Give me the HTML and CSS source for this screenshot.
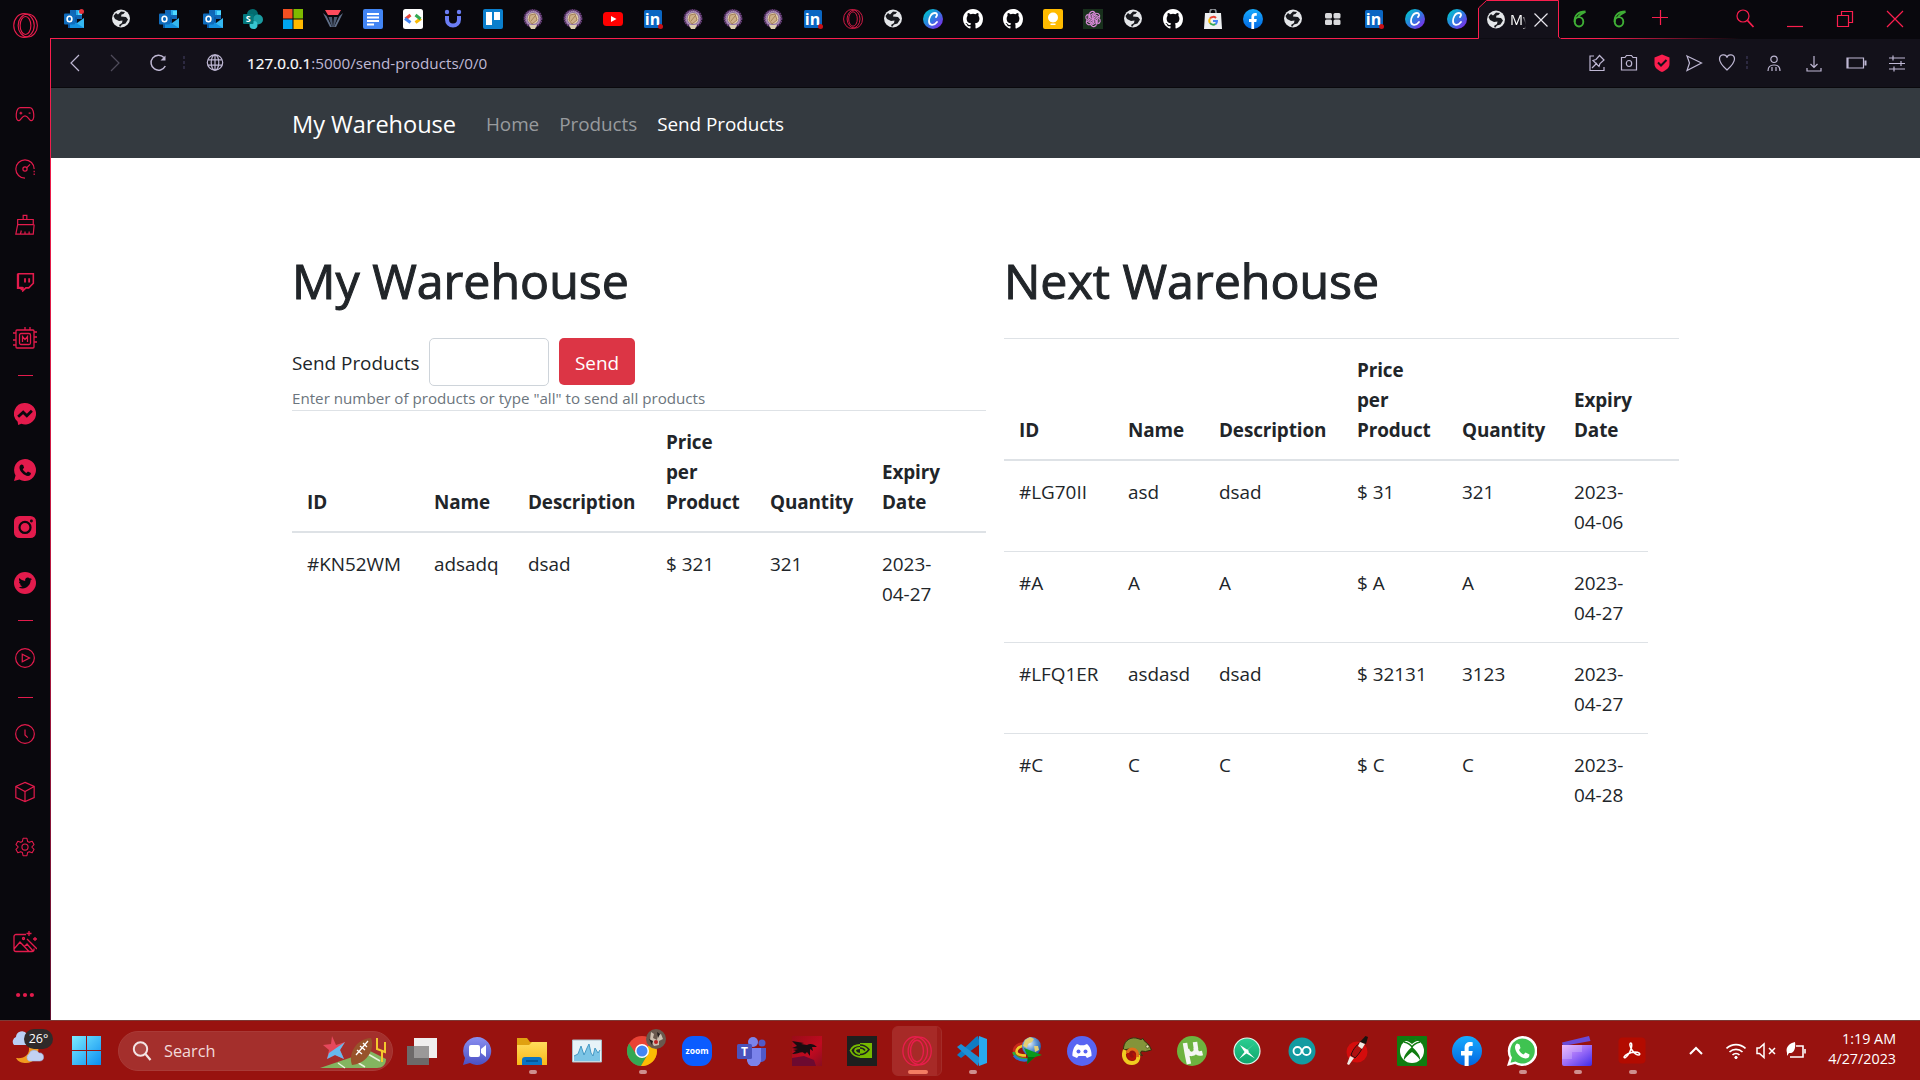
FILE: index.html
```
<!DOCTYPE html>
<html lang="en">
<head>
<meta charset="utf-8">
<title>My Warehouse</title>
<link rel="stylesheet" href="styles.css">
</head>
<body>
<svg class="gradients" width="0" height="0" aria-hidden="true">
  <defs>
    <linearGradient id="g-canva" x1="0" y1="0" x2="1" y2="1"><stop offset="0.1" stop-color="#00c4cc"/><stop offset="0.5" stop-color="#2f7be0"/><stop offset="0.9" stop-color="#7d2ae8"/></linearGradient>
    <linearGradient id="g-fb" x1="0" y1="0" x2="0" y2="1"><stop offset="0" stop-color="#18acfe"/><stop offset="1" stop-color="#0165e1"/></linearGradient>
    <linearGradient id="g-win" x1="0" y1="0" x2="1" y2="1"><stop offset="0" stop-color="#7cecff"/><stop offset="1" stop-color="#0a8df0"/></linearGradient>
    <linearGradient id="g-folder" x1="0" y1="0" x2="0" y2="1"><stop offset="0" stop-color="#ffdb5c"/><stop offset="1" stop-color="#f9b918"/></linearGradient>
    <linearGradient id="g-clip" x1="0" y1="0" x2="1" y2="1"><stop offset="0" stop-color="#e9a9fb"/><stop offset="0.5" stop-color="#9a6cf8"/><stop offset="1" stop-color="#3f2be8"/></linearGradient>
    <linearGradient id="g-chat" x1="0" y1="0" x2="0" y2="1"><stop offset="0" stop-color="#8a8ff0"/><stop offset="1" stop-color="#4b50c4"/></linearGradient>
    <linearGradient id="g-kali" x1="0" y1="0" x2="1" y2="1"><stop offset="0" stop-color="#9a0c18"/><stop offset="0.6" stop-color="#c00a20"/><stop offset="1" stop-color="#8a0d20"/></linearGradient>
    <radialGradient id="g-globe" cx=".4" cy=".35" r=".7"><stop offset="0" stop-color="#dfeaf6"/><stop offset=".5" stop-color="#5f97d6"/><stop offset="1" stop-color="#1d4c97"/></radialGradient>
    <linearGradient id="g-sym" x1="0" y1="0" x2="0" y2="1"><stop offset="0" stop-color="#2ccf92"/><stop offset="1" stop-color="#0fa56b"/></linearGradient>
  </defs>
</svg>
<svg class="symbols" aria-hidden="true">
  <symbol id="outlook" viewBox="0 0 20 20"><path fill="#1066b5" d="M6 1h12v9H6z"/><path fill="#28a8ea" d="M12 1h6v5h-6z"/><path fill="#50d9ff" d="M14 2h4v4h-4z"/><path fill="#0a5ba8" d="M4 8h9v11H4z"/><path fill="#35b8f1" d="M20 9v10H6z"/><path fill="#1490df" d="M6 10l14 9H6z"/><rect y="4.500" width="11" height="11" rx="1" fill="#0f6cbd"/><ellipse cx="5.500" cy="10" rx="2.400" ry="2.800" fill="none" stroke="#fff" stroke-width="1.600"/></symbol>
  <symbol id="world" viewBox="0 0 20 20"><circle cx="10" cy="9.500" r="9" fill="#e4e6e9"/><path fill="#17181d" d="M10 2.500l4 .5-1.500 2-2 .5-.5 2 5 .5 2 2.500-2.500 4-3.500 1-2 2.500-1-2 3-2 .5-2.500-3.500.5-4-2-1.500-3L5 4l2 1.500z"/></symbol>
  <symbol id="sharepoint" viewBox="0 0 20 20"><circle cx="9.500" cy="5.500" r="5.500" fill="#036c70"/><circle cx="15" cy="10.500" r="5" fill="#1a9ba1"/><circle cx="10.500" cy="16" r="4" fill="#37c6d0"/><rect y="5" width="10.500" height="10" rx="1" fill="#03787c"/><text x="5.200" y="13.200" class="ic-text" font-size="9" fill="#fff">S</text></symbol>
  <symbol id="msft" viewBox="0 0 20 20"><path fill="#f25022" d="M0 0h9.500v9.500H0z"/><path fill="#7fba00" d="M10.500 0H20v9.500h-9.500z"/><path fill="#00a4ef" d="M0 10.500h9.500V20H0z"/><path fill="#ffb900" d="M10.500 10.500H20V20h-9.500z"/></symbol>
  <symbol id="vee" viewBox="0 0 20 20"><path fill="#ff4b5c" d="M2 1h16l-3 5H5z"/><path fill="#60708a" d="M0 4l3.500 3L9 18H7zM20 4l-3.500 3L11 18h2z"/><path fill="#4a586f" d="M5.500 8h3.500l1 10H9zM14.500 8H11l-1 10h1z"/></symbol>
  <symbol id="docs" viewBox="0 0 20 20"><rect width="20" height="20" rx="2" fill="#4285f4"/><path stroke="#fff" stroke-width="2" d="M4 5h12M4 8.500h12M4 12h12M4 15.500h7"/></symbol>
  <symbol id="gdev" viewBox="0 0 20 20"><rect width="20" height="20" rx="2.500" fill="#fff"/><path fill="none" stroke="#ea4335" stroke-width="3" d="M2.500 10L7.500 6"/><path fill="none" stroke="#4285f4" stroke-width="3" d="M2 9.500l5.500 4"/><path fill="none" stroke="#fbbc04" stroke-width="3" d="M12.500 13.500l5.500-4"/><path fill="none" stroke="#34a853" stroke-width="3" d="M12.500 6l5 4"/></symbol>
  <symbol id="udot" viewBox="0 0 20 20"><path fill="none" stroke="#6b7df5" stroke-width="4" d="M4 7v3.500a6 6 0 0 0 12 0V7"/><circle cx="4" cy="3" r="2.200" fill="#6b7df5"/><circle cx="16" cy="3" r="2.200" fill="#6b7df5"/></symbol>
  <symbol id="trello" viewBox="0 0 20 20"><rect width="20" height="20" rx="2" fill="#0a7fcd"/><path fill="#fff" d="M3 3h6v13H3zM11 3h6v8h-6z"/></symbol>
  <symbol id="crest" viewBox="0 0 20 20"><circle cx="10" cy="9.500" r="8.300" fill="#b69fc0" stroke="#6a3f7c" stroke-width="2.200" stroke-dasharray="1.600 .6"/><circle cx="10" cy="9.500" r="6" fill="#e0cda6" stroke="#8a6c9a"/><path stroke="#a5805a" fill="#cdb189" d="M7 6l5-1 2 6-5 4-3-4zM8 12l4-5"/><path fill="#ddd0b0" d="M6 16h8l-2 4H8z"/></symbol>
  <symbol id="youtube" viewBox="0 0 20 20"><rect y="3" width="20" height="14" rx="3.500" fill="#f00"/><path fill="#fff" d="M8 7l5.500 3L8 13z"/></symbol>
  <symbol id="linkedin" viewBox="0 0 20 20"><rect x="1" y="1" width="18" height="18" rx="1.500" fill="#0a66c2"/><text x="9.500" y="16" class="ic-text" font-size="16" fill="#fff">in</text><circle cx="17.500" cy="17.500" r="2.500" fill="#cb1016"/></symbol>
  <symbol id="opera" viewBox="0 0 20 20"><g fill="none" stroke="#e81d4c" stroke-width=".9"><ellipse cx="8.800" cy="10" rx="8.200" ry="9.500"/><ellipse cx="11.800" cy="10" rx="7.700" ry="9.200"/><ellipse cx="10" cy="10" rx="4.300" ry="7.200"/></g></symbol>
  <symbol id="canva" viewBox="0 0 20 20"><circle cx="10" cy="10" r="10" fill="url(#g-canva)"/><path fill="none" stroke="#fff" stroke-width="1.800" stroke-linecap="round" d="M13 8c2-2 1-4-1-4-4 0-6 5-6 8 0 5 5 5 8 1"/></symbol>
  <symbol id="github" viewBox="0 0 16 16"><path fill="#fff" d="M8 0C3.580 0 0 3.580 0 8c0 3.540 2.290 6.530 5.470 7.590.4.070.55-.17.55-.38 0-.19-.01-.82-.01-1.490-2.010.37-2.530-.49-2.690-.94-.09-.23-.48-.94-.82-1.130-.28-.15-.68-.52-.01-.53.63-.01 1.080.58 1.230.82.72 1.210 1.870.87 2.330.66.07-.52.28-.87.51-1.070-1.780-.2-3.640-.89-3.640-3.950 0-.87.31-1.590.82-2.150-.08-.2-.36-1.020.08-2.120 0 0 .67-.21 2.200.82a7.600 7.600 0 0 1 4 0c1.530-1.040 2.200-.82 2.200-.82.44 1.100.16 1.920.08 2.120.51.56.82 1.270.82 2.150 0 3.070-1.870 3.750-3.650 3.950.29.25.54.73.54 1.480 0 1.070-.01 1.930-.01 2.200 0 .21.15.46.55.38A8.010 8.010 0 0 0 16 8c0-4.420-3.580-8-8-8z"/></symbol>
  <symbol id="keep" viewBox="0 0 20 20"><rect width="20" height="20" rx="2" fill="#fb0"/><circle cx="10" cy="8.500" r="5" fill="#fff"/><path fill="#fff" d="M7.500 10h5v3h-5zM7.500 14.500h5V16h-5z"/></symbol>
  <symbol id="gpt" viewBox="0 0 20 20"><path fill="#18301c" d="M0 0h20v20H0z"/><g fill="none" stroke="#d98ad8" stroke-width="1.100"><path id="petal" d="M10 10.800L6.500 8.800V5.500a3 3 0 0 1 5.300-2l-4 2.300v4"/><use href="#petal" transform="rotate(60 10 10)"/><use href="#petal" transform="rotate(120 10 10)"/><use href="#petal" transform="rotate(180 10 10)"/><use href="#petal" transform="rotate(240 10 10)"/><use href="#petal" transform="rotate(300 10 10)"/></g></symbol>
  <symbol id="gshop" viewBox="0 0 20 20"><path fill="none" stroke="#8d9197" stroke-width="1.600" d="M7 5V3a3 3 0 0 1 6 0v2"/><path fill="#eef0f2" d="M2 4h16l1 16H1z"/><g fill="none" stroke-width="2"><path stroke="#ea4335" d="M7 9.500a4 4 0 0 1 6-.5"/><path stroke="#fbbc04" d="M7 14a4 4 0 0 1 0-4.500"/><path stroke="#34a853" d="M7 14a4 4 0 0 0 5.500 1"/><path stroke="#4285f4" d="M10 12h4a4 4 0 0 1-1.500 3.200"/></g></symbol>
  <symbol id="facebook" viewBox="0 0 20 20"><circle cx="10" cy="10" r="10" fill="url(#g-fb)"/><path fill="#fff" d="M8.400 20v-7H6v-3h2.400V8c0-2.700 1.500-4 3.800-4 .8 0 1.600.2 1.600.2v2.500h-1.300c-1.100 0-1.400.7-1.400 1.400V10h2.700l-.5 3h-2.200v7z"/></symbol>
  <symbol id="tiles" viewBox="0 0 20 20"><g fill="#d9d9dc"><rect x="2" y="4" width="7" height="5.500" rx="1.500"/><rect x="10.500" y="4" width="7" height="5.500" rx="1.500"/><rect x="2" y="10.500" width="7" height="5.500" rx="1.500"/><rect x="10.500" y="10.500" width="7" height="5.500" rx="1.500"/></g></symbol>
  <symbol id="six" viewBox="0 0 20 20"><g fill="none" stroke="#3fae35" stroke-width="1.900"><ellipse cx="9" cy="12.800" rx="4.300" ry="4.700"/><path d="M4.700 13C4 6.500 8 2.500 15.500 2.500M8 8.500C9 5 12 5.500 15.500 2.500"/></g></symbol>

  <symbol id="pad" viewBox="0 0 24 24"><path d="M7 5h10c3 0 4 2 4.500 7 .5 5-1 8-3.500 7-2-1-3-5-6-5s-4 4-6 5c-2.500 1-4-2-3.500-7C3 7 4 5 7 5zM6 11h3M7.500 9.500v3M16 11h2"/></symbol>
  <symbol id="gauge" viewBox="0 0 24 24"><path d="M12 22A10 10 0 1 1 22 12"/><path stroke-dasharray="1.500 1.500" d="M22 14v5"/><circle cx="12" cy="12" r="2.300"/><path d="M14 10.500l3.500-3.500"/></symbol>
  <symbol id="broom" viewBox="0 0 24 24"><path d="M10 6V1.500h4V6M4 6h17v5.500H4zM4 11.500L2 22h19l1-10.500M7 22l1-4M12 22v-3M16.500 22v-3"/></symbol>
  <symbol id="twitch" viewBox="0 0 24 24"><path d="M4 2h18v11.500L16.500 19H13l-3.500 3.500V19H4z" stroke-width="1.900"/><path d="M12 7.500v5M17 7.500v5" stroke-width="2.200"/><path d="M3.500 2v17H8v3" stroke-width="2.600"/></symbol>
  <symbol id="chip" viewBox="0 0 24 24"><rect x="3" y="3" width="18" height="18" rx="1"/><rect x="6.500" y="6.500" width="11" height="11" rx="1.500"/><path d="M9.500 15V9.500l2.500 3 2.500-3V15M12 3V0M17 3V0M21 5h3M21 10h3M21 15h3M0 6h3M0 13h3M0 18h3"/></symbol>
  <symbol id="messenger" viewBox="0 0 24 24"><path class="solid" d="M12 0a12 11.700 0 1 1-4 22.700L4.500 24 4 20.500A11.700 11.700 0 0 1 12 0z"/><path stroke="#09080d" stroke-width="3" d="M4.500 15l5.500-5 4 4 5.500-5.500"/></symbol>
  <symbol id="whats-line" viewBox="0 0 24 24"><path class="solid" d="M12 0A12 12 0 1 1 6 22.400L0 24l1.700-6A12 12 0 0 1 12 0z"/><path fill="#09080d" stroke="none" d="M8 6l2 .5 1 3-1.500 1.700c1 1.800 2.200 3 4 4l1.700-1.500 3.300 1.600c0 2.200-1.500 3.200-3.200 3.200C11 18 6 13.500 6 9.200 6 7.500 7 6.500 8 6z"/></symbol>
  <symbol id="insta" viewBox="0 0 24 24"><rect class="solid" width="24" height="24" rx="6"/><circle cx="12" cy="12.500" r="6" stroke="#09080d" stroke-width="2.400"/><circle cx="19" cy="5.500" r=".9" stroke="#09080d"/></symbol>
  <symbol id="twitter" viewBox="0 0 24 24"><circle class="solid" cx="12" cy="12" r="12"/><path fill="#09080d" stroke="none" d="M5 16.500c2 .2 3.300-.4 4.200-1.100-1.400 0-2.400-1-2.700-2 .5.100.9 0 1.300-.1-1.500-.4-2.400-1.600-2.400-3 .4.300.9.400 1.400.4-1.400-1-1.800-2.700-.9-4.100 1.600 1.900 3.600 3 6.300 3.100-.5-2.200 1-3.600 2.800-3.600 1 0 1.700.4 2.300 1 .7-.1 1.300-.4 1.900-.7-.2.700-.7 1.200-1.300 1.600l1.700-.4c-.4.600-.9 1.100-1.500 1.500.2 6-6.900 11.500-13.100 7.400z"/></symbol>
  <symbol id="play" viewBox="0 0 24 24"><circle cx="12" cy="12" r="10.200"/><path d="M9 8v8l8-4z"/></symbol>
  <symbol id="clock" viewBox="0 0 24 24"><circle cx="12" cy="12" r="10.200"/><path d="M12 7v6l3 3"/></symbol>
  <symbol id="cube" viewBox="0 0 24 24"><path d="M12 1.500l10 4.500v12l-10 4.500L2 18V6zM2 6l10 5.500L22 6M12 11.500v11"/></symbol>
  <symbol id="gear" viewBox="0 0 24 24"><circle cx="12" cy="12" r="3.700"/><path d="M9.700 1.500h4.600l.8 3.800 2 1.100 3.500-1.200 2.200 3.900-2.700 2.900 2.700 2.900-2.200 3.900-3.500-1.200-2 1.100-.8 3.800H9.700l-.8-3.800-2-1.100-3.500 1.200-2.200-3.900L3.900 12 1.200 9.100l2.200-3.900 3.500 1.200 2-1.100z" stroke-linejoin="round"/></symbol>
  <symbol id="magic" viewBox="0 0 24 24"><path d="M13 3.500H3a2 2 0 0 0-2 2v13a2 2 0 0 0 2 2h16a2 2 0 0 0 2-2v-1M1 18l6-7 9 9.500M11 16l3-3 6 7M14 8l10 10M16 0v5M13.500 2.500h5M22 6v4M20 8h4"/><circle cx="10.500" cy="7.500" r="1"/></symbol>
  <symbol id="more" viewBox="0 0 24 24"><circle class="solid" cx="4.500" cy="12" r="2.300"/><circle class="solid" cx="12" cy="12" r="2.300"/><circle class="solid" cx="19.500" cy="12" r="2.300"/></symbol>

  <symbol id="back" viewBox="0 0 20 20"><path d="M13 2l-8 8 8 8"/></symbol>
  <symbol id="fwd" viewBox="0 0 20 20"><path d="M7 2l8 8-8 8"/></symbol>
  <symbol id="reload" viewBox="0 0 20 20"><path stroke-width="1.500" d="M16 4.500A7.500 7.500 0 1 0 17.300 13"/><path d="M17.500 2.500v5h-5z" fill="currentColor" stroke="none"/></symbol>
  <symbol id="globe" viewBox="0 0 20 20"><circle cx="10" cy="9.500" r="7.700"/><ellipse cx="10" cy="9.500" rx="3.800" ry="7.700"/><path d="M3 6.800h14M3 12.200h14M10 2v15"/></symbol>
  <symbol id="pin" viewBox="0 0 20 20"><path d="M7 3H3v14.500h14V14M5 15l5-5M6 7.500l6 6 1-3 4-3.500-4.500-4.500L9 6.500z"/></symbol>
  <symbol id="camera" viewBox="0 0 20 20"><path d="M2.500 4.500h3.500l1.500-2h5l1.500 2h3.500V17h-15z"/><ellipse cx="10" cy="10.500" rx="2.700" ry="3"/></symbol>
  <symbol id="shield" viewBox="0 0 20 20"><path fill="#fa1e4e" stroke="none" d="M10 1.500l7.500 3V11c0 4-4 6.500-7.500 8-3.500-1.500-7.500-4-7.500-8V4.500z"/><path stroke="#13111a" stroke-width="2" d="M6 9.500l3 3 5.500-5.500"/></symbol>
  <symbol id="send" viewBox="0 0 20 20"><path d="M3 3l14.500 7L3 17.500 5.500 10z"/></symbol>
  <symbol id="heart" viewBox="0 0 20 20"><path d="M10 17C5 12.500 2.500 9.500 2.500 6 2.500 1 9 .5 10 4.500 11 .5 17.500 1 17.500 6c0 3.500-2.500 6.500-7.500 11z"/></symbol>
  <symbol id="user" viewBox="0 0 20 20"><circle cx="10" cy="6.300" r="3.200"/><path d="M4 18c0-4 1.500-6 6-6s6 2 6 6M8 14v4M12 14v4" /></symbol>
  <symbol id="down" viewBox="0 0 20 20"><path d="M10 3v11M6.500 11l3.500 3.500 3.500-3.500M3 15v3h14v-3"/></symbol>
  <symbol id="battery" viewBox="0 0 24 20"><path d="M3 5h16.500v10H3zM4 5v10"/><path stroke-width="2" d="M21.500 7.500v5"/></symbol>
  <symbol id="sliders" viewBox="0 0 20 20"><path d="M2 5h16M2 10.500h16M2 16h16M6 2.500v5M14 8v5M7 13.500v5"/></symbol>

  <symbol id="t-view" viewBox="0 0 30 30"><path fill="#f0eeee" d="M7 2h23v20H7z"/><path fill="#6d6a6a" d="M0 10h22v19H0z"/><path fill="#9b9999" d="M7 10h15v12H7z"/></symbol>
  <symbol id="t-chat" viewBox="0 0 30 30"><path fill="url(#g-chat)" d="M15 1a14 14 0 1 1-7 26l-7 2 2-7A14 14 0 0 1 15 1z"/><rect x="7" y="9" width="11" height="12" rx="2" fill="#fff"/><path fill="#fff" d="M19 13l5-4v12l-5-4z"/></symbol>
  <symbol id="t-folder" viewBox="0 0 30 30"><path fill="#e0a110" d="M0 2h10l3 4h10v8H0z"/><path fill="url(#g-folder)" d="M0 9h12l3-3h15v23H0z"/><path fill="#0b74c4" d="M5 29v-5a3 3 0 0 1 3-3h14a3 3 0 0 1 3 3v5z"/><path stroke="#064e8c" stroke-width="1.500" d="M9 25h12"/></symbol>
  <symbol id="t-perf" viewBox="0 0 30 30"><path fill="#e7f3f8" stroke="#a9bdc7" d="M.5 4h29v22H.5z"/><path fill="#7cc5e6" d="M2 20l4-2 3-8 3 9 3-7 2-4 2 9 2 3 2-8 3 5 2-3v11H2z"/><path fill="none" stroke="#4599c4" d="M2 20l4-2 3-8 3 9 3-7 2-4 2 9 2 3 2-8 3 5 2-3"/></symbol>
  <symbol id="t-chrome" viewBox="0 0 30 30"><circle cx="15" cy="15" r="15" fill="#ea4335"/><path fill="#34a853" d="M2 7.500A15 15 0 0 0 14 30l7-12h-12z"/><path fill="#fbbc04" d="M30 15a15 15 0 0 1-16 15l7-12V10h8z"/><circle cx="15" cy="15" r="7" fill="#fff"/><circle cx="15" cy="15" r="5.500" fill="#4285f4"/></symbol>
  <symbol id="t-face" viewBox="0 0 20 20"><circle cx="10" cy="10" r="10" fill="#69594e"/><path fill="#cdbfb0" d="M5 3l3 2-1 4 4 2 1-5 3-1 2 5-4 2v4l-5 1-4-6z"/><path fill="#231d1c" d="M3 10l4 2-1 4zM11 3l3 2-2 4z"/><circle cx="10" cy="13" r="2" fill="#b22"/></symbol>
  <symbol id="t-zoom" viewBox="0 0 30 30"><rect width="30" height="30" rx="11" fill="#0b5cff"/><text x="15" y="17.500" class="ic-text" font-size="8.500" fill="#fff">zoom</text></symbol>
  <symbol id="t-teams" viewBox="0 0 30 30"><circle cx="16" cy="6" r="5" fill="#7b83eb"/><circle cx="25" cy="7" r="3.500" fill="#5059c9"/><path fill="#5059c9" d="M20 12h9v9a5 5 0 0 1-9 3z"/><path fill="#7b83eb" d="M10 12h14v10a7 7 0 0 1-14 3z"/><rect y="8" width="15" height="15" rx="1.500" fill="#4b53bc"/><text x="7.500" y="20" class="ic-text" font-size="12" fill="#fff">T</text></symbol>
  <symbol id="t-kali" viewBox="0 0 30 30"><path fill="url(#g-kali)" d="M0 0h30v30H0z"/><path fill="#190c10" d="M0 5l12 2-3 1 6 1c3-2 7-1 10 2l-5 0 1 4-3-2 0 7-3-4-2 2C10 14 7 18 0 18l4-3-3-1 5-1-6-1 5-2z"/><path fill="#6c0a30" d="M0 22l12-2 10 4 2 6H0z"/></symbol>
  <symbol id="t-nvidia" viewBox="0 0 30 30"><path fill="#1e1f1e" d="M0 0h30v30H0z"/><path fill="#76b900" d="M13 7h12v15H13z"/><path fill="none" stroke="#76b900" stroke-width="1.800" d="M13 9C8 9 5 11 3.500 14.500 6 20 10 21 14 21M13 12c-4 0-5 2-5 3 1 2 3 3 6 3"/><path fill="none" stroke="#1e1f1e" stroke-width="1.500" d="M13 9c4 0 7 2 9 4.500-2 3-5 5-9 5M13 12c3 0 4 1 5 2.500"/></symbol>
  <symbol id="t-code" viewBox="0 0 30 30"><path fill="#0f7cc4" d="M21 0l2 8L4 22l-4-3L19 1z"/><path fill="#1e8fd5" d="M4 8l19 14-2 8L0 11z"/><path fill="#2aa9ee" d="M22 0l8 3v24l-8 3V8z"/></symbol>
  <symbol id="t-idm" viewBox="0 0 30 30"><g fill="none" stroke-width="2.600"><path stroke="#c8281c" d="M14 7C6 7 2 11 2 15c0 4 6 6 12 6"/><path stroke="#f0c92a" d="M14 9.500c-6 0-9.500 3-9.500 6 0 3 5 4 9.500 4"/><path stroke="#2fae3a" d="M1.500 16c1 5 7 8 14 7"/><path stroke="#2d74cf" d="M2 19.500c3 4 8 5.500 14 4.500"/></g><circle cx="19.500" cy="10.500" r="9.500" fill="url(#g-globe)"/><path fill="#e4cf74" d="M13 4l5-3 4 2-2 3-4 2-1 4-4-2zM22 10l4 0 1 4-4 2z"/><path fill="#0a9a1c" d="M12 12l18 7-7 2-8 7 1-7z"/><path fill="#056b10" d="M16 21l-1 7 8-7z"/></symbol>
  <symbol id="t-discord" viewBox="0 0 30 30"><circle cx="15" cy="15" r="15" fill="#5865f2"/><path fill="#fff" d="M10 8l3 1.200h4L20 8c3 2 5 8 4.500 12L20 22l-1.500-2h-7L10 22l-4.500-2C5 16 7 10 10 8z"/><circle cx="11.500" cy="15.500" r="2" fill="#5865f2"/><circle cx="18.500" cy="15.500" r="2" fill="#5865f2"/></symbol>
  <symbol id="t-cham" viewBox="0 0 30 30"><path fill="#84943a" stroke="#33300f" d="M1.500 14C1 6 7 1 14 2l5 1.500 2-1 1 2 5 4.500 2.500 5-6 1.500-4-.5-1 2 2 2.500-4-1-2-3-5-3z"/><path fill="none" stroke="#f0cb20" stroke-width="4" d="M3 14c-3 7 1 13 7 13 5 0 7-4 6-8"/><path fill="none" stroke="#e0701a" stroke-width="3" d="M15.500 21c1-5-2-8-5-8-4 0-5 3-5 5"/><path fill="none" stroke="#b31207" stroke-width="2.500" d="M6 17c0 4 2 6 4.500 6 3 0 3.500-5 0-5"/><circle cx="25.500" cy="10.500" r="1.600" fill="#e8e4b0" stroke="#33300f" stroke-width=".6"/></symbol>
  <symbol id="t-ut" viewBox="0 0 30 30"><circle cx="15" cy="15" r="15" fill="#6db33f"/><path fill="none" stroke="#f4f6f2" stroke-width="4.500" d="M8 7c1 6 2 13 4 21M10 13c1 7 9 6 9 0l-1-7M18.500 12c1 6 3 6 7 5"/></symbol>
  <symbol id="t-x" viewBox="0 0 30 30"><circle cx="15" cy="15" r="13" fill="url(#g-sym)" stroke="#e3f7ee" stroke-width="1.200"/><path fill="#fff" d="M8 9l8.500 5.500c1 1-.5 2-1.500 2.500l-8 6 5.500-7zM23 7l-6.500 6c-1.500 1.500-.5 2.500 0 3l6.500 6.500-8.500-5c-1.500-1-.5-2.500 0-3z"/></symbol>
  <symbol id="t-ard" viewBox="0 0 30 30"><circle cx="15" cy="15" r="13.500" fill="#139ba1"/><g fill="none" stroke="#fff" stroke-width="1.800"><circle cx="10.500" cy="15" r="4"/><circle cx="19.500" cy="15" r="4"/></g></symbol>
  <symbol id="t-rocket" viewBox="0 0 30 30"><circle cx="15" cy="16" r="10.500" fill="#d50c0c"/><path fill="#b01010" stroke="#2b1010" d="M22 4c0 7-4 13-9 18l-4-3c2-6 6-11 13-15z"/><path fill="#17130f" d="M23.500 0l2.500 1-2 7-6-2z"/><path fill="#efe9e2" d="M18 6l5 2-3 5-4-3zM8 20l4 2-5 7-2-1z"/></symbol>
  <symbol id="t-xbox" viewBox="0 0 30 30"><rect width="30" height="30" rx="1" fill="#107c10"/><circle cx="15" cy="15" r="12" fill="#fff"/><path fill="#107c10" d="M7 5c4-1 6 2 8 3 2-1 4-4 8-3-3-3-13-3-16 0zM15 11c4 3 9 9 8 13-2-3-5-6-8-8-3 2-6 5-8 8-1-4 4-10 8-13z"/><path fill="none" stroke="#107c10" stroke-width="1.500" d="M7 6c4 1 7 3 8 5 1-2 4-4 8-5"/></symbol>
  <symbol id="t-wa" viewBox="0 0 30 30"><path fill="#fff" d="M15 0A15 15 0 1 1 8 28L0 30l2.500-8A15 15 0 0 1 15 0z"/><path fill="#3fc351" d="M15 2.500A12.500 12.500 0 1 1 8.500 25.500L3.500 26.700 5 21.500A12.500 12.500 0 0 1 15 2.500z"/><path fill="#fff" d="M10 7.500l2.500 1 1 3.500-1.500 2c1 2 2.500 3.500 4.500 4.500l2-2 4 2c0 3-2 4-4 4C13 22 8 16 8 11c0-1.500 1-3 2-3.500z"/></symbol>
  <symbol id="t-clip" viewBox="0 0 30 30"><path fill="#6a4bd8" d="M0 6.500L27 0l1.500 5L1 10z"/><path fill="url(#g-clip)" d="M0 9h30v19a2 2 0 0 1-2 2H2a2 2 0 0 1-2-2z"/><path fill="#fff" opacity=".2" d="M0 9h20v7H0zM0 16h10v7H0z"/></symbol>
  <symbol id="t-pdf" viewBox="0 0 30 30"><rect x="1.500" y="1.500" width="27" height="26" rx="4" fill="#b30b00"/><path fill="none" stroke="#fff" stroke-width="1.500" d="M14 7c-2 0-1 4 1 7s5 5 7 5c2-1 0-3-4-3-5 0-10 3-11 5 1 3 6-4 7-8 1-3 1-6 0-6z"/></symbol>
</svg>

<div class="desktop">
  <div class="browser">
    <aside class="sidebar">
      <span class="logo"><svg><use href="#opera"/></svg></span>
      <i></i>
      <span><svg><use href="#pad"/></svg></span>
      <span><svg><use href="#gauge"/></svg></span>
      <span><svg><use href="#broom"/></svg></span>
      <span><svg class="small"><use href="#twitch"/></svg></span>
      <span><svg class="big"><use href="#chip"/></svg></span>
      <hr>
      <span><svg><use href="#messenger"/></svg></span>
      <span><svg><use href="#whats-line"/></svg></span>
      <span><svg><use href="#insta"/></svg></span>
      <span><svg><use href="#twitter"/></svg></span>
      <hr>
      <span><svg><use href="#play"/></svg></span>
      <hr>
      <span><svg><use href="#clock"/></svg></span>
      <span><svg><use href="#cube"/></svg></span>
      <span><svg class="small"><use href="#gear"/></svg></span>
      <i></i>
      <span><svg class="big"><use href="#magic"/></svg></span>
      <span><svg><use href="#more"/></svg></span>
    </aside>

    <div class="window">
      <div class="tabs">
        <span class="w46 dot"><svg><use href="#outlook"/></svg></span>
        <span class="w48"><svg><use href="#world"/></svg></span>
        <span class="w48"><svg><use href="#outlook"/></svg></span>
        <span><svg><use href="#outlook"/></svg></span>
        <span><svg><use href="#sharepoint"/></svg></span>
        <span><svg><use href="#msft"/></svg></span>
        <span><svg><use href="#vee"/></svg></span>
        <span><svg><use href="#docs"/></svg></span>
        <span><svg><use href="#gdev"/></svg></span>
        <span><svg><use href="#udot"/></svg></span>
        <span><svg><use href="#trello"/></svg></span>
        <span><svg><use href="#crest"/></svg></span>
        <span><svg><use href="#crest"/></svg></span>
        <span><svg><use href="#youtube"/></svg></span>
        <span><svg><use href="#linkedin"/></svg></span>
        <span><svg><use href="#crest"/></svg></span>
        <span><svg><use href="#crest"/></svg></span>
        <span><svg><use href="#crest"/></svg></span>
        <span><svg><use href="#linkedin"/></svg></span>
        <span><svg><use href="#opera"/></svg></span>
        <span><svg><use href="#world"/></svg></span>
        <span><svg><use href="#canva"/></svg></span>
        <span><svg><use href="#github"/></svg></span>
        <span><svg><use href="#github"/></svg></span>
        <span><svg><use href="#keep"/></svg></span>
        <span><svg><use href="#gpt"/></svg></span>
        <span><svg><use href="#world"/></svg></span>
        <span><svg><use href="#github"/></svg></span>
        <span><svg><use href="#gshop"/></svg></span>
        <span><svg><use href="#facebook"/></svg></span>
        <span><svg><use href="#world"/></svg></span>
        <span><svg><use href="#tiles"/></svg></span>
        <span class="w41"><svg><use href="#linkedin"/></svg></span>
        <span class="w42"><svg><use href="#canva"/></svg></span>
        <span class="w42"><svg><use href="#canva"/></svg></span>
        <div class="tab-active">
          <svg class="outline" viewBox="0 0 83 39"><path d="M0 38.500h.5V8L8.500.5h72V37l2 1.500" fill="#13111a" stroke="#fa1e4e"/></svg>
          <svg><use href="#world"/></svg>
          <b>My</b>
          <svg class="close" viewBox="0 0 14 14"><path d="M.5.500l13 13M13.500.500l-13 13" stroke="#e8e6ee" fill="none" stroke-width="1.200"/></svg>
        </div>
        <div class="tabs-rest">
          <span><svg><use href="#six"/></svg></span>
          <span><svg><use href="#six"/></svg></span>
          <span><svg class="line" viewBox="0 0 20 20"><path d="M2 8.500h16M10.500 1v15"/></svg></span>
          <div class="controls">
            <span><svg class="line" viewBox="0 0 20 20"><circle cx="8" cy="7" r="6"/><path d="M12.500 11.500l6 6.500" stroke-width="1.800"/></svg></span>
            <span><svg class="line" viewBox="0 0 20 20"><path d="M2 17.500h16"/></svg></span>
            <span><svg class="line" viewBox="0 0 20 20"><path d="M2.500 6.500h11v11h-11zM6.500 6V2.500h11v11h-3.500"/></svg></span>
            <span><svg class="line" viewBox="0 0 20 20"><path d="M2 2l16 16M18 2L2 18"/></svg></span>
          </div>
        </div>
      </div>

      <div class="toolbar">
        <svg class="back"><use href="#back"/></svg>
        <svg class="fwd"><use href="#fwd"/></svg>
        <svg class="reload"><use href="#reload"/></svg>
        <i class="sep"></i>
        <svg class="site"><use href="#globe"/></svg>
        <div class="url"><strong>127.0.0.1</strong>:5000/send-products/0/0</div>
        <div class="tools">
          <svg><use href="#pin"/></svg>
          <svg><use href="#camera"/></svg>
          <svg><use href="#shield"/></svg>
          <svg><use href="#send"/></svg>
          <svg><use href="#heart"/></svg>
          <i class="sep"></i>
          <svg class="user"><use href="#user"/></svg>
          <svg class="far"><use href="#down"/></svg>
          <svg class="wide"><use href="#battery"/></svg>
          <svg class="far"><use href="#sliders"/></svg>
        </div>
      </div>

      <div class="page">
        <nav class="navbar">
          <a class="brand">My Warehouse</a>
          <a>Home</a>
          <a>Products</a>
          <a class="active">Send Products</a>
        </nav>
        <main class="columns">
          <section class="mine">
            <h1>My Warehouse</h1>
            <form class="send-form">
              <label for="count">Send Products</label>
              <input id="count" type="text">
              <button type="button">Send</button>
            </form>
            <small>Enter number of products or type "all" to send all products</small>
            <table>
              <colgroup><col class="c127"><col class="c94"><col class="c138"><col class="c104"><col class="c112"><col class="c89"><col></colgroup>
              <thead><tr><th>ID</th><th>Name</th><th>Description</th><th>Price<br>per<br>Product</th><th>Quantity</th><th>Expiry<br>Date</th><th></th></tr></thead>
              <tbody><tr><td>#KN52WM</td><td>adsadq</td><td>dsad</td><td>$ 321</td><td>321</td><td>2023-<br>04-27</td></tr></tbody>
            </table>
          </section>
          <section class="next">
            <h1>Next Warehouse</h1>
            <table>
              <colgroup><col class="c109"><col class="c91"><col class="c138"><col class="c105"><col class="c112"><col class="c89"><col></colgroup>
              <thead><tr><th>ID</th><th>Name</th><th>Description</th><th>Price<br>per<br>Product</th><th>Quantity</th><th>Expiry<br>Date</th><th></th></tr></thead>
              <tbody>
                <tr><td>#LG70II</td><td>asd</td><td>dsad</td><td>$ 31</td><td>321</td><td>2023-<br>04-06</td></tr>
                <tr><td>#A</td><td>A</td><td>A</td><td>$ A</td><td>A</td><td>2023-<br>04-27</td></tr>
                <tr><td>#LFQ1ER</td><td>asdasd</td><td>dsad</td><td>$ 32131</td><td>3123</td><td>2023-<br>04-27</td></tr>
                <tr><td>#C</td><td>C</td><td>C</td><td>$ C</td><td>C</td><td>2023-<br>04-28</td></tr>
              </tbody>
            </table>
          </section>
        </main>
      </div>
    </div>
  </div>

  <footer class="taskbar">
    <div class="weather">
      <svg width="32" height="36" viewBox="0 0 32 36"><path fill="#b9cff5" d="M2 17a5 5 0 0 1 2-8 6 6 0 0 1 11-3v11z"/><path fill="#f29a1f" d="M26 18c2 10-4 17-12 17-4 0-8-1-10-5 8 1 14-3 13-11z"/><path fill="#c2d2f3" stroke="#9db4e4" stroke-width=".6" d="M17 33a4 4 0 0 1 0-7 5.500 5.500 0 0 1 10-1 4 4 0 0 1 1 8z"/></svg>
      <span>26°</span>
    </div>
    <svg class="start" width="29" height="29" viewBox="0 0 29 29"><path fill="url(#g-win)" d="M0 0h14v14H0zM15 0h14v14H15zM0 15h14v14H0zM15 15h14v14H15z"/></svg>
    <div class="search">
      <svg width="20" height="20" viewBox="0 0 20 20"><circle cx="8.500" cy="8" r="6.700" fill="rgba(255,255,255,.12)" stroke="#f3e4e4" stroke-width="2"/><path d="M13.500 13l5 6" stroke="#f3e4e4" stroke-width="2.200"/></svg>
      <span>Search</span>
      <svg class="art" width="70" height="36" viewBox="0 0 70 36"><path fill="#83b560" d="M0 35L50 18l16 8c0 6-4 9-9 9z"/><path stroke="#e7f2dc" stroke-width="1.500" d="M18 30l7 5M32 26l13 8M48 21l12 7" fill="none"/><path fill="#e5485c" d="M12 3l4 9 9-3-5 8 4 9-9-4-8 4 2-9-6-5 8-1z"/><path fill="#66b9ed" d="M25 9l-5 8 4 9-9-4-8 4 2-6z"/><path fill="#98532b" d="M51 5c4 9-2 25-19 27-4-10 3-26 19-27z"/><path stroke="#fff" stroke-width="1.300" fill="none" d="M36 22L48 8M37 17l5 4M40 13l5 4M43 10l4 4"/><path fill="none" stroke="#f3c92d" stroke-width="2" d="M57 5v11l8 3V9M62 18v11"/></svg>
    </div>
    <div class="apps">
      <span><svg><use href="#t-view"/></svg></span>
      <span><svg><use href="#t-chat"/></svg></span>
      <span class="run"><svg><use href="#t-folder"/></svg></span>
      <span><svg><use href="#t-perf"/></svg></span>
      <span class="run"><svg><use href="#t-chrome"/></svg><svg class="face"><use href="#t-face"/></svg></span>
      <span><svg><use href="#t-zoom"/></svg></span>
      <span><svg><use href="#t-teams"/></svg></span>
      <span><svg><use href="#t-kali"/></svg></span>
      <span><svg><use href="#t-nvidia"/></svg></span>
      <span class="current"><em><svg><use href="#opera"/></svg></em></span>
      <span class="run"><svg><use href="#t-code"/></svg></span>
      <span><svg><use href="#t-idm"/></svg></span>
      <span><svg><use href="#t-discord"/></svg></span>
      <span><svg><use href="#t-cham"/></svg></span>
      <span><svg><use href="#t-ut"/></svg></span>
      <span><svg><use href="#t-x"/></svg></span>
      <span><svg><use href="#t-ard"/></svg></span>
      <span><svg><use href="#t-rocket"/></svg></span>
      <span><svg><use href="#t-xbox"/></svg></span>
      <span><svg><use href="#facebook"/></svg></span>
      <span class="run"><svg><use href="#t-wa"/></svg></span>
      <span class="run"><svg><use href="#t-clip"/></svg></span>
      <span class="run"><svg><use href="#t-pdf"/></svg></span>
    </div>
    <div class="tray">
      <svg width="14" height="20" viewBox="0 0 14 20"><path d="M1 13l6-6 6 6" stroke-width="2"/></svg>
      <svg class="wifi" width="20" height="20" viewBox="0 0 20 20"><path d="M.5 7.500a13.500 13.500 0 0 1 19 0M3.500 11a9.500 9.500 0 0 1 13 0M6.500 14a5 5 0 0 1 7 0" stroke-width="1.700"/><circle cx="10" cy="16.500" r="1.200" fill="#fff"/></svg>
      <svg width="20" height="20" viewBox="0 0 20 20"><path d="M1 7h2.500L8 3v13.500L3.500 12.500H1zM13 7l6 6M19 7l-6 6" stroke-width="1.500"/></svg>
      <svg width="20" height="20" viewBox="0 0 20 20"><path d="M10 5h7v11H4M19 8v4.500" stroke-width="1.600"/><path fill="#fff" stroke="none" d="M1 12C-1 6 4 2 9 1c1 6-1 12-6 11l-2 3z"/></svg>
    </div>
    <div class="time"><div>1:19 AM</div><div>4/27/2023</div></div>
  </footer>
</div>
</body>
</html>
```
FILE: styles.css
```
* { box-sizing: border-box; }
body {
  margin: 0;
  font-family: "Open Sans", "Noto Sans", sans-serif;
  font-size: 18.9px;
  line-height: 30px;
  color: #212529;
  background: #fff;
  overflow: hidden;
}
.gradients { display: block; width: 0; height: 0; }
svg { display: block; flex: none; }
svg.symbols { display: none; }
.ic-text { font-family: "Open Sans", sans-serif; font-weight: 700; text-anchor: middle; }
.solid { fill: #e31b4c; stroke: none; }

.desktop { width: 1920px; height: 1080px; display: flex; flex-direction: column; }
.browser { height: 1020px; display: flex; background: #09080d; }

/* Browser sidebar */
.sidebar {
  width: 51px;
  flex: none;
  padding-right: 1px;
  background: linear-gradient(#fa1e4e, #d01a45 40%, #5a1230) 50px 38px / 1px 100% no-repeat #09080d;
  display: grid;
  grid-template-rows: 51px 35px 55px 55px 57px 58px 56px 16px 61px 52px 62px 50px 24px 52px 26px 48px 68px 42px 49px 52px 51px;
  justify-items: center;
  align-items: center;
}
.sidebar svg { width: 22px; height: 22px; fill: none; stroke: #e31b4c; stroke-width: 1.3; }
.sidebar .logo svg { width: 25px; height: 25px; stroke: none; }
.sidebar svg.big { width: 24px; height: 24px; }
.sidebar svg.small { width: 20px; height: 20px; }
.sidebar hr { width: 15px; height: 1px; margin: 0; border: 0; background: #e31b4c; }

.window { flex: 1; min-width: 0; display: flex; flex-direction: column; }

/* Tab strip */
.tabs { height: 39px; display: flex; background: linear-gradient(#fa1e4e, #fa1e4e) 0 38px / 1427px 1px no-repeat #09080d; }
.tabs span { width: 40px; height: 38px; display: flex; align-items: center; justify-content: center; flex: none; }
.tabs svg { width: 20px; height: 20px; }
.tabs .w46 { width: 46px; position: relative; }
.tabs .w48 { width: 48px; }
.tabs .w41 { width: 41px; }
.tabs .w42 { width: 42px; }
.dot::after { content: ""; position: absolute; left: 28px; top: 9px; width: 5px; height: 5px; border-radius: 50%; background: #e2313a; }
.tab-active { position: relative; width: 81px; height: 39px; display: flex; align-items: center; padding-left: 8px; flex: none; }
.tab-active svg { position: relative; width: 20px; }
.tabs .tab-active .outline { position: absolute; left: 0; top: 0; width: 83px; height: 39px; }
.tab-active b { position: relative; width: 16px; margin-left: 4px; overflow: hidden; font-size: 14.5px; font-weight: 400; color: #fff; -webkit-mask: linear-gradient(90deg, #000 75%, transparent); mask: linear-gradient(90deg, #000 75%, transparent); }
.tabs .tab-active .close { width: 14px; height: 14px; margin-left: 8px; }
.tabs-rest { flex: 1; display: flex; padding-left: 1px; background: linear-gradient(90deg, #fa1e4e, #fa1e4e 40px, transparent 180px) 2px 38px / 100% 1px no-repeat; }
.tabs svg.line { fill: none; stroke: #fa1e4e; stroke-width: 1.2; }
.controls { display: flex; margin-left: auto; }
.controls span { width: 50px; }

/* Address bar */
.toolbar { height: 49px; display: flex; align-items: center; padding-left: 15px; background: #13111a; border-bottom: 1px solid #0a090d; color: #bfb8d4; }
.toolbar svg { width: 20px; height: 20px; fill: none; stroke: currentColor; stroke-width: 1.2; }
.toolbar .fwd { margin: 0 24px 0 18px; opacity: .35; }
.sep { width: 2px; height: 14px; background: repeating-linear-gradient(#2c2940 0 3px, transparent 3px 5px); }
.reload + .sep { margin-left: 15px; }
.site { margin: 0 22px 0 20px; }
.url { font-size: 15.25px; line-height: 24px; }
.url strong { color: #fff; font-weight: 500; -webkit-text-stroke: .2px #fff; }
.tools { margin-left: auto; display: flex; align-items: center; gap: 12.5px; padding-right: 13px; }
.tools .sep { margin-left: -3px; }
.tools .user { margin-left: 3px; }
.tools .far { margin-left: 8px; }
.toolbar .wide { width: 24px; margin-right: -1px; margin-left: 7px; }

/* Web page */
.page { flex: 1; background: #fff; }
.navbar { height: 70px; padding: 2px 0 0 241px; display: flex; align-items: center; gap: 20px; background: #343a40; color: #989b9e; }
.navbar a { letter-spacing: -.05px; }
.navbar .brand { font-size: 23.6px; color: #fff; margin-right: 10px; white-space: nowrap; }
.navbar .active { color: #fff; }
.columns { display: flex; gap: 18px; padding: 92px 0 0 241px; }
.mine { width: 694px; }
.next { width: 675px; }
h1 { margin: 0 0 28px; font-size: 48.3px; line-height: 60px; font-weight: 500; -webkit-text-stroke: 1px #212529; white-space: nowrap; }
.send-form { display: flex; height: 48px; align-items: center; }
.send-form label { width: 137px; padding-top: 2px; }
.send-form input { width: 120px; height: 48px; border: 1px solid #ced4da; border-radius: 5px; padding: 0 15px; font: inherit; background: #fff; }
.send-form button { width: 76px; height: 47px; margin-left: 10px; margin-bottom: 1px; padding: 2px 0 0; border: 0; border-radius: 5px; background: #dc3545; color: #fff; font: inherit; }
small { display: block; height: 24px; font-size: 15.17px; line-height: 25px; color: #6c757d; }
table { width: 100%; table-layout: fixed; border-spacing: 0; border-collapse: separate; }
th, td { padding: 16px 0 14px 15px; text-align: left; vertical-align: top; white-space: nowrap; }
th { height: 123px; border-top: 1px solid #dee2e6; border-bottom: 2px solid #dee2e6; vertical-align: bottom; font-weight: 700; letter-spacing: -.12px; }
tbody tr + tr td { border-top: 1px solid #dee2e6; }
.c127 { width: 127px; } .c94 { width: 94px; } .c138 { width: 138px; } .c104 { width: 104px; }
.c112 { width: 112px; } .c89 { width: 89px; } .c109 { width: 109px; } .c91 { width: 91px; } .c105 { width: 105px; }

/* Desktop taskbar */
.taskbar { height: 60px; display: flex; align-items: center; background: #98120f; border-top: 1px solid #7c3a36; color: #fff; }
.weather { width: 72px; height: 59px; position: relative; padding: 7px 0 0 12px; }
.weather span { position: absolute; left: 24px; top: 8px; width: 29px; height: 20px; border-radius: 10px; background: #2f2a2a; font-size: 12.5px; line-height: 20px; text-align: center; }
.start { margin-right: 17px; }
.search { width: 275px; height: 40px; border-radius: 20px; background: #a42f2c; display: flex; align-items: center; padding-left: 13px; border: 1px solid #a93a37; font-size: 16.3px; color: #f2dada; overflow: hidden; }
.search span { margin-left: 12px; }
.art { margin-left: auto; margin-right: 2px; margin-top: 1px; }
.apps { display: flex; margin-left: 1.5px; }
.apps > span { width: 55px; height: 59px; display: flex; align-items: center; justify-content: center; position: relative; }
.apps svg { width: 30px; height: 30px; }
.apps .face { position: absolute; left: 31px; top: 8px; width: 20px; height: 20px; }
.run::after, .current::after { content: ""; position: absolute; left: 24px; top: 49px; width: 8px; height: 4px; border-radius: 2px; background: #cf8f8e; }
.current::after { left: 18px; width: 20px; background: #f47c62; }
.current em { width: 50px; height: 50px; display: flex; align-items: center; padding-left: 9px; border-radius: 6px; border: 1px solid #a32c28; background: linear-gradient(90deg, #a72a27 44px, #9d1d1a 44px); }
.tray { display: flex; margin-left: 29px; gap: 10px; align-items: center; }
.tray svg { fill: none; stroke: #fff; }
.tray .wifi { margin-left: 13px; }
.time { margin-left: auto; padding: 0 24px 3px 0; text-align: right; font-size: 14.3px; line-height: 20px; }
```
